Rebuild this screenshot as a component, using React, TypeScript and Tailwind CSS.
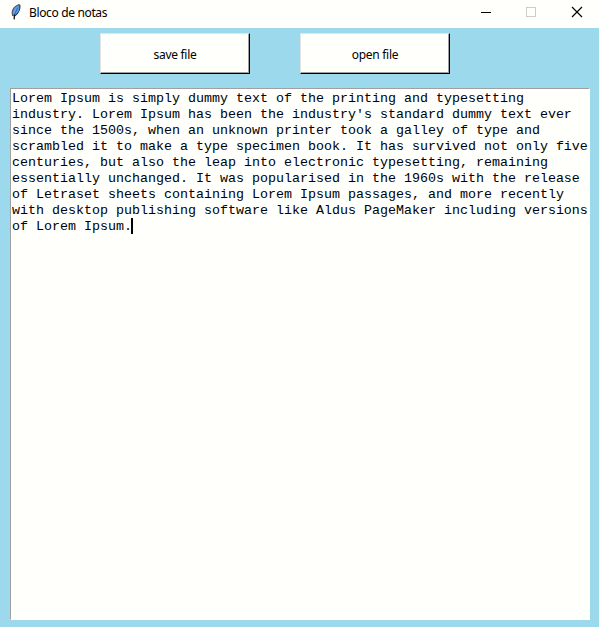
import React from "react";

const lines = [
  "Lorem Ipsum is simply dummy text of the printing and typesetting",
  "industry. Lorem Ipsum has been the industry's standard dummy text ever",
  "since the 1500s, when an unknown printer took a galley of type and",
  "scrambled it to make a type specimen book. It has survived not only five",
  "centuries, but also the leap into electronic typesetting, remaining",
  "essentially unchanged. It was popularised in the 1960s with the release",
  "of Letraset sheets containing Lorem Ipsum passages, and more recently",
  "with desktop publishing software like Aldus PageMaker including versions",
  "of Lorem Ipsum.",
];

function Feather() {
  return (
    <svg width="16" height="16" viewBox="0 0 16 16" className="block">
      <path d="M11.8 .2C7.8 1.6 4.6 5 4.2 8.5L4.7 12 7.4 11.5C10.8 9 12.6 5 11.8 .2Z" fill="#5b9ff0" />
      <path d="M11.4 .5C7.4 1.8 4.6 5 4.2 8.5L4.7 12" fill="none" stroke="#555" strokeWidth="1.2" />
      <path d="M11.8 .8C12.5 4.5 10.6 9 7.4 11.4L5.9 12" fill="none" stroke="#1b2b44" strokeWidth="1.1" />
      <path d="M9.9 3.5L6.3 11" fill="none" stroke="#2763b4" strokeWidth=".9" />
      <path d="M6.4 10.5L6.2 15.4" fill="none" stroke="#111" strokeWidth="1.3" />
    </svg>
  );
}

function TkButton({ label }: { label: string }) {
  return (
    <button className="h-[41px] w-[150px] border border-t-[#e3e3e3] border-l-[#e3e3e3] border-r-black border-b-black bg-[#fffffc]">
      <span className="flex h-full w-full items-center justify-center border-r border-b border-[#a0a0a0] pt-[3px] pl-px text-[12px] tracking-[-0.3px]">
        {label}
      </span>
    </button>
  );
}

export default function App() {
  return (
    <div className="flex h-[627px] w-[599px] flex-col overflow-hidden bg-[#9dd9ed] font-['Noto_Sans',sans-serif] text-black">
      <header className="flex h-7 shrink-0 items-center bg-[#fffffc] pl-[8px]">
        <div className="-mt-1">
          <Feather />
        </div>
        <h1 className="ml-[5px] -mt-[2px] text-[12px] leading-4 tracking-[-0.35px]">Bloco de notas</h1>
        <svg width="106" height="28" viewBox="0 0 106 28" className="mr-[14px] ml-auto" shapeRendering="crispEdges">
          <path d="M2 12.5h10" stroke="#000" />
          <rect x="47.5" y="7.5" width="9" height="9" fill="none" stroke="#ccc" />
          <path d="M93 7l10 10M103 7l-10 10" stroke="#000" strokeWidth="1.15" shapeRendering="auto" />
        </svg>
      </header>
      <div className="flex gap-[50px] pt-[5px] pl-[100px]">
        <TkButton label="save file" />
        <TkButton label="open file" />
      </div>
      <main className="mx-[10px] mt-[14px] h-[532px] w-[580px] shrink-0 border border-t-[#a0a0a0] border-r-[#fffffc] border-b-[#fffffc] border-l-[#a0a0a0] bg-[#fffffc] pt-[2px] pl-px font-['Liberation_Mono',monospace] text-[13.333px] leading-4">
        {lines.map((line, i) => (
          <div key={line} className="flex h-4 whitespace-pre">
            {line}
            {i === lines.length - 1 && <span className="-mt-px -ml-px h-4 w-[2px] bg-black" />}
          </div>
        ))}
      </main>
    </div>
  );
}
